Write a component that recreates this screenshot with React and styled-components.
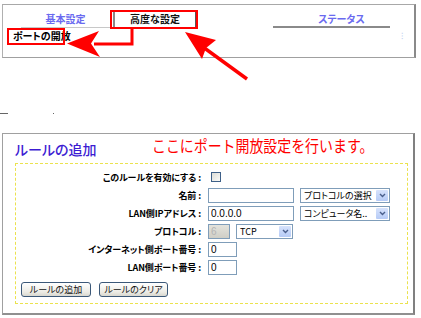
import React from 'react';
import styled, { createGlobalStyle } from 'styled-components';

const GlobalStyle = createGlobalStyle`
    html, body {
        margin: 0;
        padding: 0;
        background: #ffffff;
    }
    body {
        font-family: "Noto Sans CJK JP", "Liberation Sans", sans-serif;
        font-feature-settings: "palt";
    }
`;

const Page = styled.div`
    position: relative;
    width: 421px;
    height: 318px;
    padding-top: 4px;
    box-sizing: border-box;
    overflow: hidden;
`;

const TopPanel = styled.div`
    margin-left: 2px;
    width: 414px;
    height: 54px;
    box-sizing: border-box;
    border-top: 1px solid #a8a8a8;
    border-left: 1px solid #b0b0b0;
    border-right: 2px solid #8a8a8a;
    border-bottom: 1px solid #a0a0a0;
    display: flex;
    flex-direction: column;
`;

const TabBar = styled.div`
    display: flex;
    align-items: flex-start;
    padding-top: 6px;
`;

const Tab = styled.div`
    margin-left: ${p => p.$offset}px;
    width: ${p => p.$w}px;
    height: 17px;
    box-sizing: border-box;
    padding-top: 1px;
    padding-left: ${p => p.$pad || 0}px;
    text-align: center;
    font-size: 10px;
    line-height: 14px;
    font-weight: bold;
    color: #6a6af0;
    border-bottom: ${p => p.$line};
`;

const ActiveTab = styled.div`
    margin-left: 3px;
    width: 84px;
    height: 17px;
    box-sizing: border-box;
    text-align: center;
    font-size: 10px;
    line-height: 14px;
    font-weight: bold;
    color: #111;
    background: #fff;
    border-top: 1px solid #9a9a9a;
    border-left: 2px solid #8a8a8a;
    border-right: 2px solid #555;
    border-bottom: 1px solid #777;
`;

const SubRow = styled.div`
    display: flex;
    justify-content: space-between;
    align-items: center;
    height: 16px;
    padding: 0 11px 0 10px;
`;

const SubTitle = styled.div`
    font-size: 10px;
    font-weight: bold;
    color: #000;
    line-height: 16px;
`;

const Fleck = styled.span`
    font-size: 9px;
    color: #c4d2f0;
    line-height: 10px;
`;

const Marks = styled.div`
    margin-top: 54px;
    height: 2px;
    display: flex;
    align-items: center;
    gap: 45px;
`;

const Mark = styled.span`
    display: block;
    width: ${p => p.$w}px;
    height: 1px;
    background: #666;
`;

const RulePanel = styled.div`
    margin-top: 19px;
    margin-left: 2px;
    width: 413px;
    height: 182px;
    box-sizing: border-box;
    border-top: 1px solid #a0a0a0;
    border-left: 1px solid #a0a0a0;
    border-right: 2px solid #808080;
    border-bottom: 2px solid #909090;
`;

const RuleHeader = styled.div`
    display: flex;
    align-items: flex-start;
    height: 29px;
    padding-left: 12px;
`;

const RuleTitle = styled.div`
    padding-top: 6px;
    font-size: 14px;
    line-height: 18px;
    font-weight: 500;
    color: #3c1cd2;
    white-space: nowrap;
`;

const Note = styled.div`
    margin-left: 55px;
    padding-top: 1px;
    font-size: 16px;
    line-height: 20px;
    color: #ff0000;
    white-space: nowrap;
    font-feature-settings: normal;
    transform: scaleX(0.87);
    transform-origin: left center;
`;

const DashedBox = styled.div`
    margin: 0 5px 0 12px;
    height: 141px;
    box-sizing: border-box;
    border: 1px dashed #ebe24e;
    padding-top: 4px;
`;

const Form = styled.div`
    display: grid;
    grid-template-columns: 185px 1fr;
    grid-auto-rows: 18px;
    column-gap: 7px;
    align-items: center;
`;

const Label = styled.div`
    text-align: right;
    font-size: 9px;
    letter-spacing: -0.1px;
    font-weight: bold;
    color: #000;
    white-space: nowrap;
`;

const Field = styled.div`
    display: flex;
    align-items: center;
    gap: 6px;
`;

const TextBox = styled.input`
    width: ${p => p.$w}px;
    height: 15px;
    box-sizing: border-box;
    margin: 0;
    padding: 0 2px;
    border: 1px solid #7f9db9;
    font-family: "Liberation Sans", sans-serif;
    font-size: 10px;
    color: #000;
    background: ${p => (p.disabled ? 'linear-gradient(#e4e3dc, #cfcec6)' : '#fff')};
    outline: none;
    &:disabled {
        color: #b4b4b4;
    }
`;

const SelectBox = styled.div`
    width: ${p => p.$w}px;
    height: 15px;
    box-sizing: border-box;
    border: 1px solid #7f9db9;
    background: #fff;
    display: flex;
    align-items: center;
    justify-content: space-between;
    padding-left: 3px;
    font-family: "Noto Sans CJK JP", "Liberation Sans", sans-serif;
    font-size: 9px;
    line-height: 13px;
    color: #000;
`;

const Drop = styled.span`
    width: 12px;
    height: 11px;
    margin-right: 1px;
    display: flex;
    align-items: center;
    justify-content: center;
    background: linear-gradient(#d6e2fc, #b6cbf6);
    border-radius: 1px;
`;

const Check = styled.span`
    display: block;
    margin-left: 3px;
    width: 10px;
    height: 10px;
    box-sizing: border-box;
    border: 1px solid #3e6088;
    background: linear-gradient(135deg, #dcdcd6, #fbfbf8);
`;

const Buttons = styled.div`
    display: flex;
    gap: 8px;
    margin-top: 6px;
    padding-left: 5px;
`;

const Button = styled.div`
    width: ${p => p.$w}px;
    height: 15px;
    box-sizing: border-box;
    border: 1px solid #3b5878;
    border-radius: 3px;
    background: linear-gradient(#ffffff, #ecebe4 70%, #d8d7cf);
    display: flex;
    align-items: center;
    justify-content: center;
    font-size: 9px;
    color: #111;
`;

const Annotations = styled.svg`
    position: absolute;
    left: 0;
    top: 0;
    pointer-events: none;
`;

function Select({ width, children }) {
    return (
        <SelectBox $w={width}>
            <span>{children}</span>
            <Drop>
                <svg width="7" height="5" viewBox="0 0 7 5">
                    <path d="M1 1 L3.5 3.5 L6 1" fill="none" stroke="#4a5f8c" strokeWidth="1.4" />
                </svg>
            </Drop>
        </SelectBox>
    );
}

const rows = [
    { label: 'このルールを有効にする', field: <Check /> },
    {
        label: '名前',
        field: (
            <>
                <TextBox $w={86} defaultValue="" />
                <Select width={90}>プロトコルの選択</Select>
            </>
        ),
    },
    {
        label: 'LAN側IPアドレス',
        field: (
            <>
                <TextBox $w={86} defaultValue="0.0.0.0" />
                <Select width={90}>コンピュータ名..</Select>
            </>
        ),
    },
    {
        label: 'プロトコル',
        field: (
            <>
                <TextBox $w={22} defaultValue="6" disabled />
                <Select width={57}>TCP</Select>
            </>
        ),
    },
    { label: 'インターネット側ポート番号', field: <TextBox $w={29} defaultValue="0" /> },
    { label: 'LAN側ポート番号', field: <TextBox $w={29} defaultValue="0" /> },
];

export default function App() {
    return (
        <>
            <GlobalStyle />
            <Page>
                <TopPanel>
                    <TabBar>
                        <Tab $offset={18} $w={89} $line="1px solid #c8c8c8">基本設定</Tab>
                        <ActiveTab>高度な設定</ActiveTab>
                        <Tab $offset={76} $w={117} $pad={20} $line="2px solid #8a8a8a">ステータス</Tab>
                    </TabBar>
                    <SubRow>
                        <SubTitle>ポートの開放</SubTitle>
                        <Fleck>⁝</Fleck>
                    </SubRow>
                </TopPanel>

                <Marks>
                    <Mark $w={8} />
                    <Mark $w={1} />
                </Marks>

                <RulePanel>
                    <RuleHeader>
                        <RuleTitle>ルールの追加</RuleTitle>
                        <Note>ここにポート開放設定を行います。</Note>
                    </RuleHeader>
                    <DashedBox>
                        <Form>
                            {rows.map((row) => (
                                <React.Fragment key={row.label}>
                                    <Label>{row.label} :</Label>
                                    <Field>{row.field}</Field>
                                </React.Fragment>
                            ))}
                        </Form>
                        <Buttons>
                            <Button $w={70}>ルールの追加</Button>
                            <Button $w={69}>ルールのクリア</Button>
                        </Buttons>
                    </DashedBox>
                </RulePanel>

                <Annotations width="421" height="100" viewBox="0 0 421 100">
                    <rect x="111" y="11" width="86" height="17" fill="none" stroke="#ff0000" strokeWidth="2" />
                    <rect x="8" y="29" width="56" height="15" fill="none" stroke="#ff0000" strokeWidth="2" />
                    <polyline points="132,29 132,44 94,44" fill="none" stroke="#ff0000" strokeWidth="3" />
                    <polygon points="67,43.5 99,31 91,43.5 100,57" fill="#ff0000" />
                    <line x1="247" y1="79" x2="203" y2="47" stroke="#ff0000" strokeWidth="3.5" />
                    <polygon points="185,32 216,40 206,48 202,59" fill="#ff0000" />
                </Annotations>
            </Page>
        </>
    );
}
